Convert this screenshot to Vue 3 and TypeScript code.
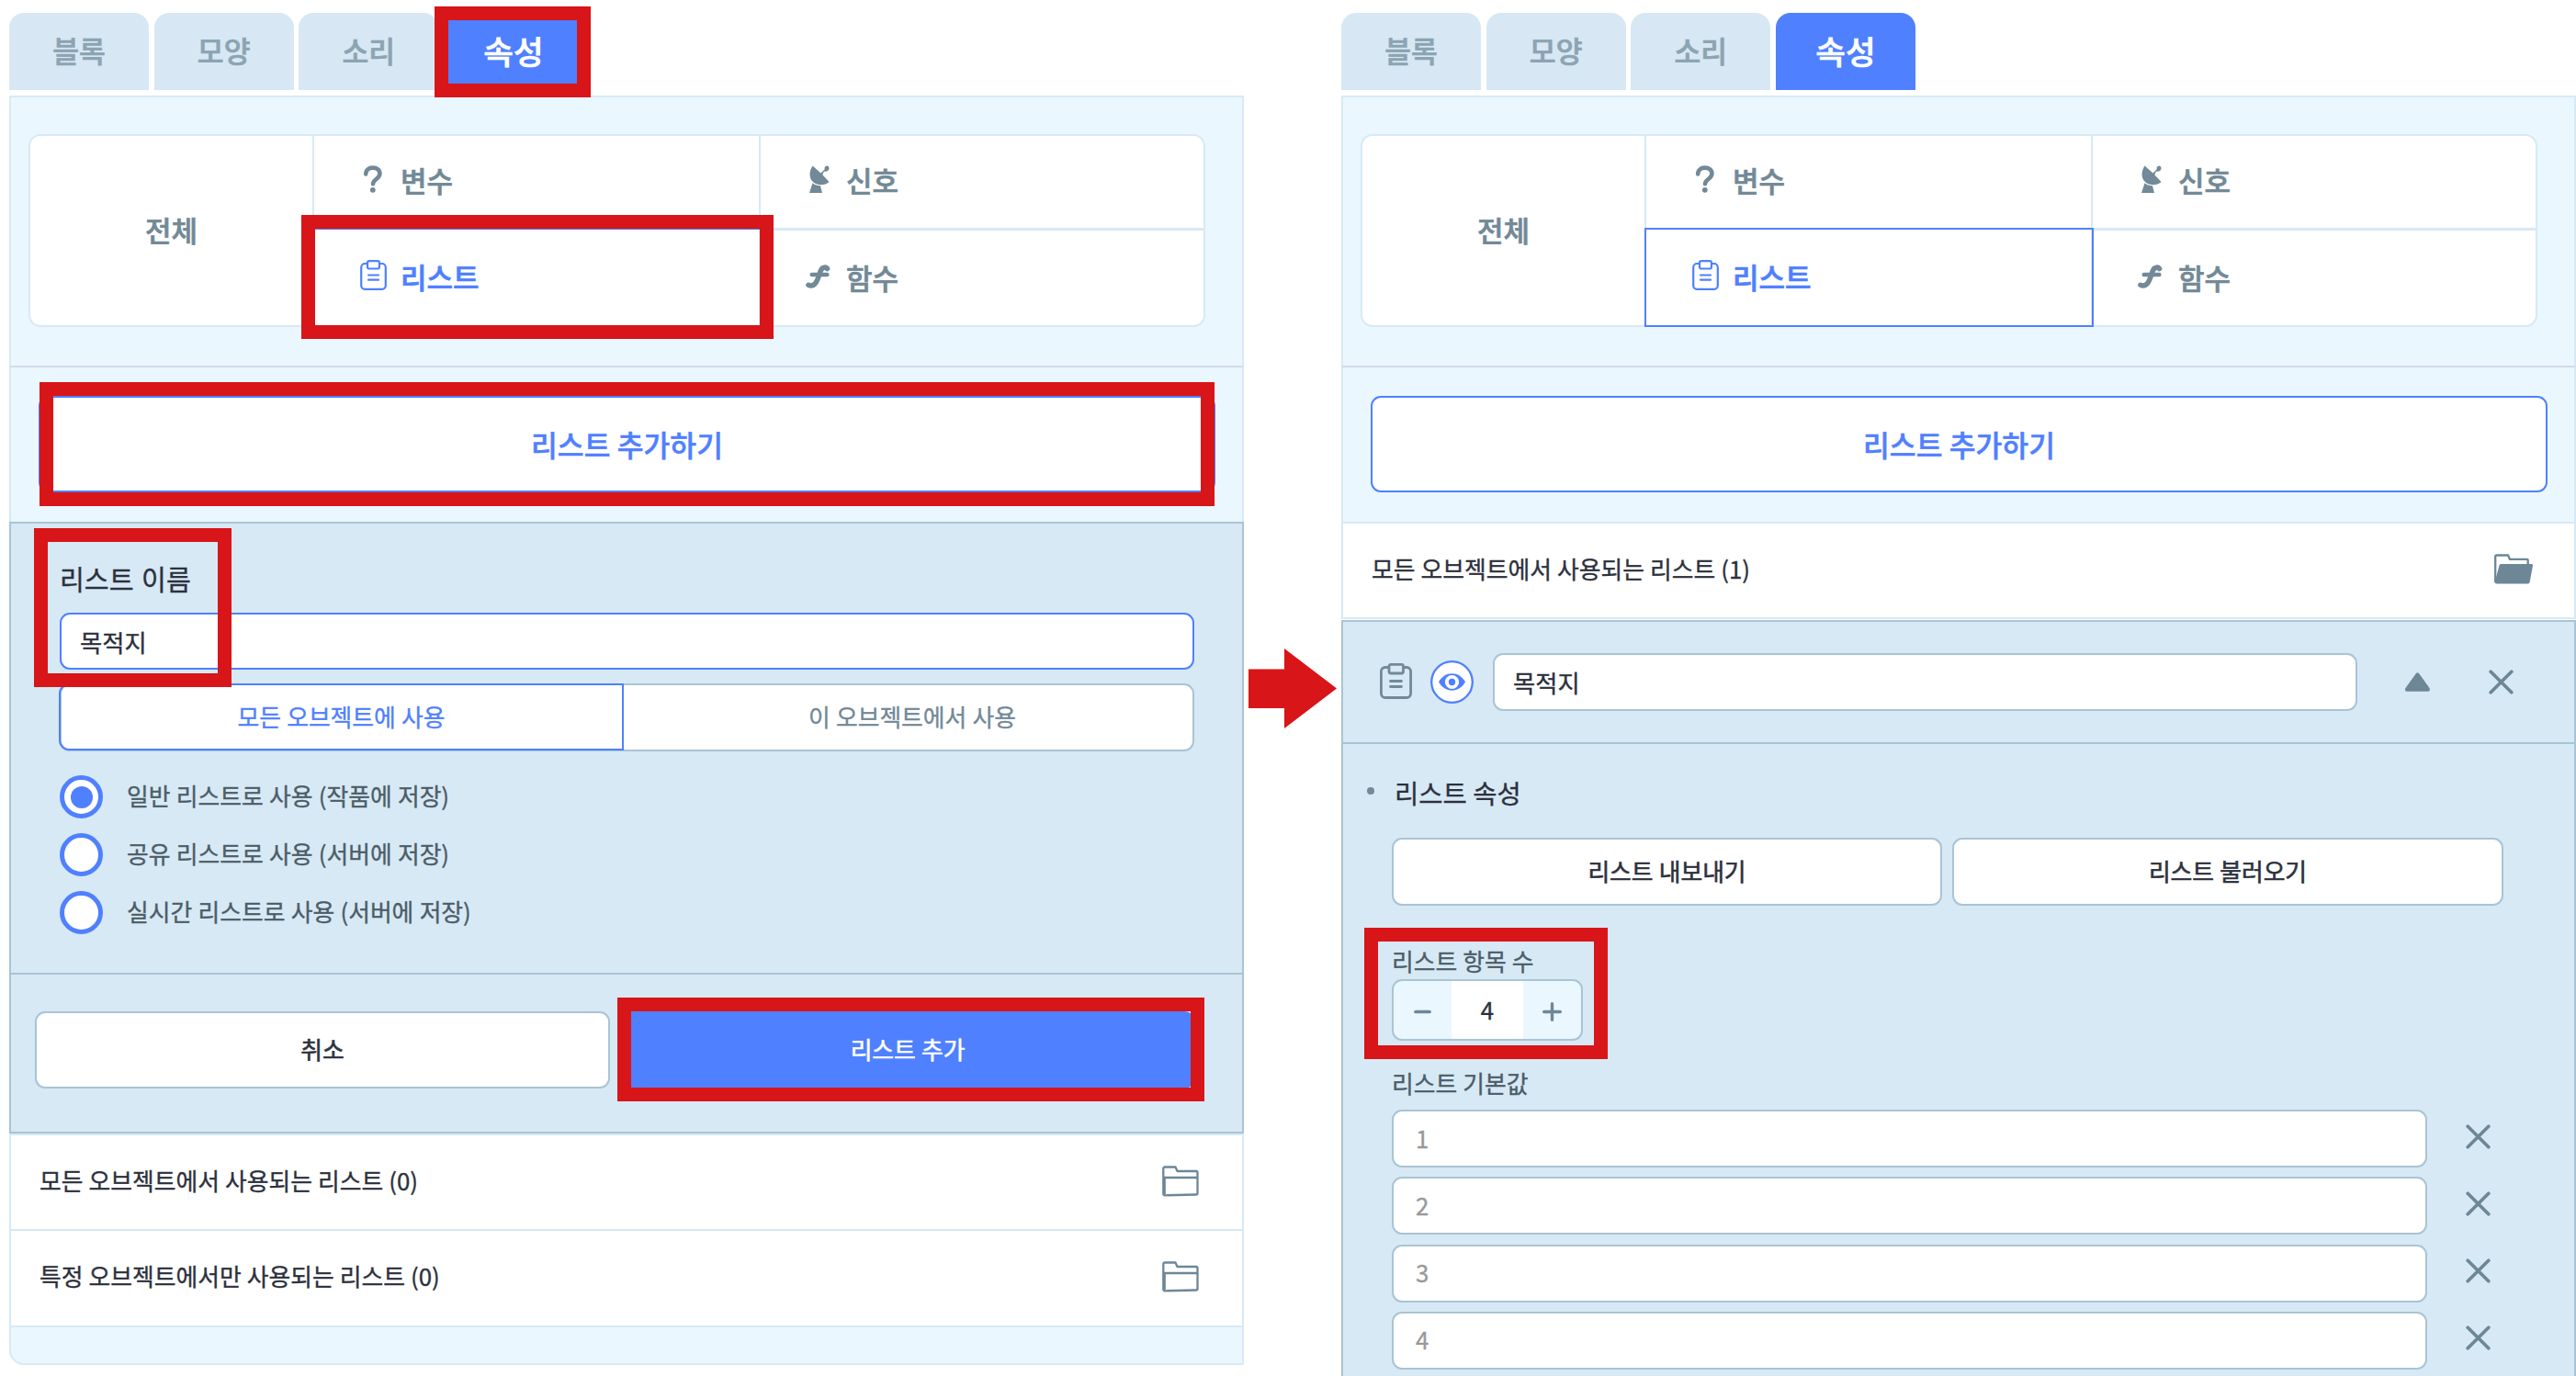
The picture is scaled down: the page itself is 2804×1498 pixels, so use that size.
<script setup lang="ts">
import { ref } from 'vue'

interface Box {
  x: number
  y: number
  w: number
  h: number
}

const tabs = ['블록', '모양', '소리', '속성']
const filters = [
  { label: '변수', icon: 'question' },
  { label: '신호', icon: 'signal' },
  { label: '리스트', icon: 'list' },
  { label: '함수', icon: 'func' },
]
const storage = [
  '일반 리스트로 사용 (작품에 저장)',
  '공유 리스트로 사용 (서버에 저장)',
  '실시간 리스트로 사용 (서버에 저장)',
]
const groups = ['모든 오브젝트에서 사용되는 리스트 (0)', '특정 오브젝트에서만 사용되는 리스트 (0)']
const items = [1, 2, 3, 4]

const listName = ref('목적지')
const chosen = ref(0)

/* Red frames that point out each step */
const marks: Box[] = [
  { x: 473, y: 7, w: 170, h: 99 },
  { x: 328, y: 234, w: 514, h: 135 },
  { x: 43, y: 416, w: 1279, h: 135 },
  { x: 37, y: 575, w: 215, h: 173 },
  { x: 672, y: 1086, w: 639, h: 113 },
  { x: 1485, y: 1010, w: 265, h: 143 },
]
const place = (b: Box) => ({
  left: `${b.x}px`,
  top: `${b.y}px`,
  width: `${b.w}px`,
  height: `${b.h}px`,
})
</script>

<template>
  <main class="page">
    <section v-for="side in 2" :key="side" class="panel">
      <nav class="tabs">
        <div v-for="(t, i) in tabs" :key="t" class="tab" :class="{ on: i === 3 }"><span>{{ t }}</span></div>
      </nav>

      <div class="filter-area">
        <div class="filter">
          <div class="all"><span>전체</span></div>
          <div class="grid">
            <div v-for="(f, i) in filters" :key="f.label" class="cell" :class="{ on: i === 2, right: i % 2 === 1, low: i > 1 }">
              <span class="ico">
                <svg v-if="f.icon === 'question'" width="22" height="30" viewBox="0 0 22 30">
                  <path d="M3.2 9.5C3.2 5 6.4 2.6 10.7 2.6c4.500 0 7.700 2.500 7.700 6.500 0 5.800-7.400 6-7.400 11.200" fill="none" stroke="#728997" stroke-width="4.600" stroke-linecap="round" />
                  <circle cx="10.800" cy="26.800" r="2.900" fill="#728997" />
                </svg>
                <svg v-else-if="f.icon === 'signal'" width="24" height="30" viewBox="0 0 24 30">
                  <path d="M4.500.5C.300 7 .600 14.500 5.500 18.500c5 4 12.500 3.500 17-.5L15.300 10.300l1.700-3.800c2.500.8 5.500-.5 5.500-3.200C22.500 1.200 21 .3 19.500.7c-1.700.4-2.300 2-1.800 3.600L13.500 8.500z" fill="#728997" />
                  <path d="M4.500 19.300c2.700 2.200 5.400 3 8.500 3L15 30H1z" fill="#728997" />
                </svg>
                <svg v-else-if="f.icon === 'list'" width="29" height="33" viewBox="0 0 29 33">
                  <rect x="1.200" y="4" width="26.600" height="27.800" rx="4" fill="none" stroke="#4f80ff" stroke-width="2.200" />
                  <rect x="8" y="1.200" width="13" height="8.300" rx="2" fill="#fff" stroke="#4f80ff" stroke-width="2.200" />
                  <path d="M9 16.500h11M9 21.700h11" stroke="#4f80ff" stroke-width="2.200" stroke-linecap="round" />
                </svg>
                <svg v-else class="fn" width="28" height="27" viewBox="0 0 28 27">
                  <path d="M23.500 5.500c-1.500-2-5-2-6.800 1.500C14.500 11 13.800 17.500 10.500 21.500 8.500 23.800 5.500 24.500 3 23.300" fill="none" stroke="#728997" stroke-width="5.600" stroke-linecap="round" />
                  <path d="M6.800 12h16.500" stroke="#728997" stroke-width="4.600" stroke-linecap="round" />
                </svg>
              </span>
              <span>{{ f.label }}</span>
            </div>
          </div>
        </div>
      </div>

      <div class="add-area">
        <div class="add"><span>리스트 추가하기</span></div>
      </div>

      <template v-if="side === 1">
        <div class="form">
          <div class="fields">
            <div class="label big">리스트 이름</div>
            <div class="field focus"><span>{{ listName }}</span></div>
            <div class="toggle">
              <div class="opt on"><span>모든 오브젝트에 사용</span></div>
              <div class="opt"><span>이 오브젝트에서 사용</span></div>
            </div>
            <div class="radios">
              <div v-for="(s, i) in storage" :key="s" class="radio" @click="chosen = i">
                <i class="ring"><b v-if="chosen === i"></b></i><span>{{ s }}</span>
              </div>
            </div>
          </div>
          <div class="actions">
            <div class="btn cancel"><span>취소</span></div>
            <div class="btn ok"><span>리스트 추가</span></div>
          </div>
        </div>
        <div v-for="g in groups" :key="g" class="group">
          <span>{{ g }}</span>
          <svg width="40" height="34" viewBox="0 0 40 34">
            <path d="M1.300 30.500V3a1.500 1.500 0 0 1 1.500-1.500H14.500L16.500 6H37a1.500 1.500 0 0 1 1.500 1.500V30a1.500 1.500 0 0 1-1.500 1.500L3 32.300a1.600 1.600 0 0 1-1.700-1.800zM1.300 13H38.500M2.700 14v17" fill="none" stroke="#6d8796" stroke-width="2.300" stroke-linejoin="round" />
          </svg>
        </div>
        <div class="tail"></div>
      </template>

      <template v-else>
        <div class="group open">
          <span>모든 오브젝트에서 사용되는 리스트 (1)</span>
          <svg width="43" height="34" viewBox="0 0 43 34">
            <path d="M1.200 31V2.700A1.200 1.200 0 0 1 2.400 1.500H15L17 5.800H35.500A1.200 1.200 0 0 1 36.700 7V12" fill="none" stroke="#6d8796" stroke-width="2.300" />
            <path d="M7.500 11H40.500c1.200 0 1.700.8 1.500 1.800L38.700 30.500c-.2 1.300-1 2-2.200 2H2.500C1.200 32.500.5 31.500.8 30.300L5.500 12.500C5.800 11.500 6.500 11 7.500 11z" fill="#6d8796" />
          </svg>
        </div>
        <div class="detail">
          <div class="head">
            <svg class="clip" width="35" height="39" viewBox="0 0 35 39">
              <rect x="1.400" y="4.500" width="32.200" height="33" rx="4.500" fill="none" stroke="#728997" stroke-width="2.800" />
              <rect x="10" y="1.400" width="15.500" height="9.600" rx="2" fill="#d7e9f5" stroke="#728997" stroke-width="2.800" />
              <path d="M11.500 19.500h12M11.500 25.500h12" stroke="#728997" stroke-width="2.800" stroke-linecap="round" />
            </svg>
            <svg class="eye" width="47" height="47" viewBox="0 0 47 47">
              <circle cx="23.500" cy="23.500" r="22.300" fill="#fff" stroke="#4f80ff" stroke-width="2.300" />
              <path d="M9 23.500C12.500 17.500 17.500 14.300 23.500 14.300S34.500 17.500 38 23.500C34.500 29.500 29.500 32.700 23.500 32.700S12.500 29.500 9 23.500z" fill="#4f80ff" />
              <circle cx="23.500" cy="23.500" r="7.600" fill="#fff" />
              <circle cx="23.500" cy="23.500" r="3.700" fill="#4f80ff" />
            </svg>
            <div class="field name"><span>{{ listName }}</span></div>
            <svg class="tri" width="27" height="21" viewBox="0 0 27 21">
              <path d="M11.800 1.200Q13.500-.8 15.200 1.200L26.300 16.700Q27 17.700 27 18.700T25.500 20.700H1.500Q0 20.700 0 18.700T.7 16.700z" fill="#6d8796" />
            </svg>
            <svg class="cross" width="27" height="27" viewBox="0 0 27 27"><path d="M2.200 2.200l22.600 22.600M24.800 2.200L2.200 24.800" stroke="#6d8796" stroke-width="3.700" stroke-linecap="round" /></svg>
          </div>
          <div class="body">
            <div class="title"><i class="dot"></i><span>리스트 속성</span></div>
            <div class="io">
              <div class="btn"><span>리스트 내보내기</span></div>
              <div class="btn"><span>리스트 불러오기</span></div>
            </div>
            <div class="label count">리스트 항목 수</div>
            <div class="stepper">
              <div class="step"><svg width="19" height="20" viewBox="0 0 19 20"><path d="M2 9.500h15" stroke="#6d8796" stroke-width="3.700" stroke-linecap="round" /></svg></div>
              <div class="value"><span>{{ items.length }}</span></div>
              <div class="step"><svg width="21" height="21" viewBox="0 0 21 21"><path d="M1.700 10.500h17.600M10.500 1.700v17.600" stroke="#6d8796" stroke-width="3.400" stroke-linecap="round" /></svg></div>
            </div>
            <div class="label defaults">리스트 기본값</div>
            <div class="items">
              <div v-for="n in items" :key="n" class="item">
                <div class="field"><span>{{ n }}</span></div>
                <svg width="27" height="27" viewBox="0 0 27 27"><path d="M2.200 2.200l22.600 22.600M24.800 2.200L2.200 24.800" stroke="#6d8796" stroke-width="3.700" stroke-linecap="round" /></svg>
              </div>
            </div>
          </div>
        </div>
      </template>
    </section>

    <svg class="arrow" width="96" height="88" viewBox="0 0 96 88"><path d="M0 22.500H39V0L96 43.500 39 87V65H0z" fill="#d81518" /></svg>
    <div v-for="(m, i) in marks" :key="i" class="mark" :style="place(m)"></div>
  </main>
</template>

<style>
body {
  background: #fff;
  overflow: hidden;
}
</style>

<style scoped>
.page,
.page * {
  box-sizing: border-box;
}
.page {
  position: relative;
  width: 2804px;
  height: 1498px;
  overflow: hidden;
  display: flex;
  gap: 106px;
  padding-left: 10px;
  background: #fff;
  color: #2c313d;
  font-family: 'Noto Sans CJK KR', 'Noto Sans', sans-serif;
  font-size: 25.800px;
  word-spacing: 0.3px;
  line-height: 36px;
  white-space: nowrap;
  -webkit-text-stroke-width: 0.35px;
}
.page span {
  position: relative;
  top: -1px;
}
.panel {
  width: 1344px;
  flex: none;
}
.tabs {
  display: flex;
  gap: 5.650px;
  padding-top: 14px;
  margin-bottom: 6px;
}
.tab {
  width: 152px;
  height: 84px;
  border-radius: 16px 16px 0 0;
  background: #d7e8f4;
  color: #8ca4b2;
  font-size: 31.300px;
  font-weight: 500;
  -webkit-text-stroke-width: 0.7px;
  display: flex;
  align-items: center;
  justify-content: center;
}
.tab.on {
  background: #4f80ff;
  color: #fff;
  font-size: 35.500px;
}
.filter-area {
  height: 296px;
  padding: 40px 0 0 19px;
  background: #eaf7ff;
  border: 2px solid #d7e9f5;
  border-bottom-color: #d5d9ea;
}
.filter {
  width: 1281px;
  height: 210px;
  border: 2px solid #d7e9f5;
  border-radius: 13px;
  background: #fff;
  display: flex;
  font-size: 31px;
  font-weight: 500;
  -webkit-text-stroke-width: 0.7px;
  color: #728997;
}
.all {
  width: 307px;
  display: flex;
  align-items: center;
  justify-content: center;
}
.grid {
  flex: 1;
  display: grid;
  grid-template-columns: 486px 1fr;
  grid-template-rows: 103px 103px;
}
.cell {
  border-left: 2px solid #d7e9f5;
  display: flex;
  align-items: center;
  padding: 0 0 5px 49px;
}
.cell.right {
  padding-left: 48px;
}
.cell.low {
  border-top: 3px solid #d7e9f5;
  margin-top: -3px;
  padding-bottom: 0;
}
.cell.on {
  position: relative;
  z-index: 1;
  color: #4f80ff;
  border: 2px solid #4f80ff;
  margin: -3px -3px -2px 0;
  padding-bottom: 0;
}
.ico {
  width: 44px;
  display: flex;
  align-items: center;
}
.page .cell .ico {
  top: -2px;
  margin-left: 1px;
}
.page .cell.on .ico {
  top: -3px;
}
.cell:first-child .ico svg {
  margin-left: 3px;
}
.cell.right .ico {
  width: 44px;
}
.cell.right .ico svg {
  margin-left: 3px;
}
.cell.right .ico svg.fn {
  margin-left: 0;
}
.add-area {
  height: 168px;
  padding: 31px 0 0 30px;
  background: #eaf7ff;
  border: solid #d7e9f5;
  border-width: 0 2px;
}
.add {
  width: 1281px;
  height: 105px;
  border: 2px solid #4f80ff;
  border-radius: 11px;
  background: #fff;
  color: #4f80ff;
  font-size: 31.300px;
  font-weight: 500;
  -webkit-text-stroke-width: 0.5px;
  display: flex;
  align-items: center;
  justify-content: center;
  padding-top: 3px;
}
.form {
  height: 666px;
  border: 2px solid #a9c4d4;
  background: #d7e9f5;
}
.fields {
  height: 489px;
  padding: 39px 52px 0 53px;
}
.label {
  color: #4c5d68;
}
.label.big {
  color: #2c313d;
  font-size: 29.200px;
  line-height: 40px;
  word-spacing: 2px;
  margin-bottom: 18px;
}
.field {
  height: 62px;
  border: 2px solid #a9c4d4;
  border-radius: 11px;
  background: #fff;
  display: flex;
  align-items: center;
  padding: 3px 0 0 20px;
  font-size: 26.300px;
}
.field.focus {
  border-color: #4f80ff;
}
.toggle {
  height: 74px;
  margin-top: 15px;
  border: 2px solid #a9c4d4;
  border-radius: 11px;
  background: #fff;
  display: flex;
}
.opt {
  flex: 1;
  display: flex;
  align-items: center;
  justify-content: center;
  color: #728997;
  padding-left: 9px;
}
.opt.on {
  flex: none;
  width: 615px;
  margin: -2px 0 -1px -3px;
  padding-left: 0;
  border: 2px solid #4f80ff;
  border-radius: 11px 0 0 11px;
  color: #4f80ff;
}
.radios {
  margin-top: 26px;
  display: flex;
  flex-direction: column;
  gap: 16px;
}
.radio {
  height: 47px;
  display: flex;
  align-items: center;
  gap: 26px;
  color: #4c5d68;
}
.page .radio span {
  top: -1.5px;
  word-spacing: 0.5px;
}
.ring {
  width: 47px;
  height: 47px;
  border: 5px solid #4f80ff;
  border-radius: 50%;
  background: #fff;
  display: flex;
  align-items: center;
  justify-content: center;
}
.ring b {
  width: 24px;
  height: 24px;
  border-radius: 50%;
  background: #4f80ff;
}
.actions {
  height: 173px;
  border-top: 2px solid #a9c4d4;
  padding: 40px 0 0 26px;
  display: flex;
  gap: 12px;
}
.btn {
  height: 84px;
  border: 2px solid #a9c4d4;
  border-radius: 11px;
  background: #fff;
  -webkit-text-stroke-width: 0.6px;
  display: flex;
  align-items: center;
  justify-content: center;
}
.cancel {
  width: 626px;
}
.ok {
  width: 624px;
  border-color: #4f80ff;
  background: #4f80ff;
  color: #fff;
}
.group {
  height: 104px;
  border: solid #d7e9f5;
  border-width: 2px 2px 0;
  background: #fff;
  display: flex;
  align-items: center;
  justify-content: space-between;
  padding: 0 47px 3px 31px;
}
.group + .group {
  height: 105px;
}
.group.open {
  height: 106px;
  border-bottom-width: 2px;
  margin-bottom: 1px;
  padding: 0 44px 2px 31px;
}
.tail {
  height: 43px;
  border: 2px solid #d7e9f5;
  border-radius: 0 0 0 16px;
  background: #eaf7ff;
}
.detail {
  height: 900px;
  border: 2px solid #a9c4d4;
  background: #d7e9f5;
}
.head {
  height: 133px;
  border-bottom: 2px solid #a9c4d4;
  padding-left: 40px;
  display: flex;
  align-items: center;
}
.head svg {
  flex: none;
}
.clip {
  margin-right: 20px;
  margin-top: -2px;
}
.eye {
  margin-right: 21px;
}
.name {
  width: 941px;
  height: 63px;
  margin-right: 52px;
}
.tri {
  margin-right: 64px;
}
.cross {
  margin-top: -1px;
}
.body {
  padding: 34px 0 0 53px;
}
.title {
  display: flex;
  align-items: center;
  height: 40px;
  margin-left: -27px;
  font-size: 28.5px;
}
.dot {
  width: 8px;
  height: 8px;
  border-radius: 50%;
  background: #728997;
  margin: -6px 22px 0 0;
}
.io {
  display: flex;
  gap: 11px;
  margin-top: 28px;
}
.io .btn {
  width: 599px;
  height: 74px;
}
.io .btn + .btn {
  width: 600px;
}
.count {
  margin: 42px 0 2px;
}
.stepper {
  width: 208px;
  height: 67px;
  border: 2px solid #a9c4d4;
  border-radius: 11px;
  background: #eaf7ff;
  display: flex;
  overflow: hidden;
}
.step {
  width: 63px;
  flex: none;
  display: flex;
  align-items: center;
  justify-content: center;
  padding: 4px 1px 0 0;
}
.value {
  width: 78px;
  background: #fff;
  display: flex;
  align-items: center;
  justify-content: center;
}
.defaults {
  margin: 28px 0 11px;
}
.items {
  display: flex;
  flex-direction: column;
  gap: 10.300px;
}
.item {
  display: flex;
  align-items: center;
  gap: 42px;
}
.item svg {
  margin-top: -5px;
}
.item .field {
  width: 1127px;
  height: 63px;
  padding: 0 0 0 24px;
  font-size: 25.800px;
  color: #999;
}
.arrow {
  position: absolute;
  left: 1359px;
  top: 706px;
}
.mark {
  position: absolute;
  z-index: 2;
  border: 15px solid #d81518;
}
</style>
